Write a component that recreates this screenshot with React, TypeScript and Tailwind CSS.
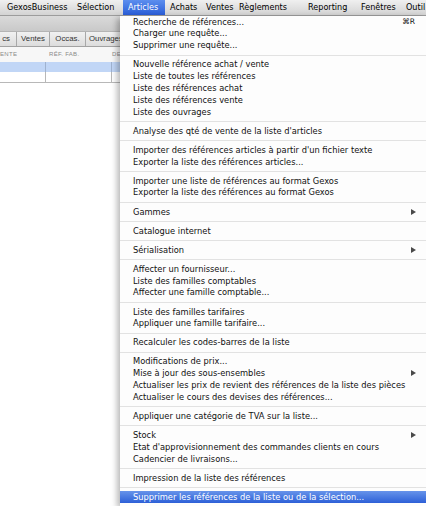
import React from "react";

type Item = { label: string; arrow?: boolean; shortcut?: string; active?: boolean };

const groups: Item[][] = [
  [
    { label: "Recherche de références...", shortcut: "⌘R" },
    { label: "Charger une requête..." },
    { label: "Supprimer une requête..." },
  ],
  [
    { label: "Nouvelle référence achat / vente" },
    { label: "Liste de toutes les références" },
    { label: "Liste des références achat" },
    { label: "Liste des références vente" },
    { label: "Liste des ouvrages" },
  ],
  [{ label: "Analyse des qté de vente de la liste d'articles" }],
  [
    { label: "Importer des références articles à partir d'un fichier texte" },
    { label: "Exporter la liste des références articles..." },
  ],
  [
    { label: "Importer une liste de références au format Gexos" },
    { label: "Exporter la liste des références au format Gexos" },
  ],
  [{ label: "Gammes", arrow: true }],
  [{ label: "Catalogue internet" }],
  [{ label: "Sérialisation", arrow: true }],
  [
    { label: "Affecter un fournisseur..." },
    { label: "Liste des familles comptables" },
    { label: "Affecter une famille comptable..." },
  ],
  [
    { label: "Liste des familles tarifaires" },
    { label: "Appliquer une famille tarifaire..." },
  ],
  [{ label: "Recalculer les codes-barres de la liste" }],
  [
    { label: "Modifications de prix..." },
    { label: "Mise à jour des sous-ensembles", arrow: true },
    { label: "Actualiser les prix de revient des références de la liste des pièces" },
    { label: "Actualiser le cours des devises des références..." },
  ],
  [{ label: "Appliquer une catégorie de TVA sur la liste..." }],
  [
    { label: "Stock", arrow: true },
    { label: "Etat d'approvisionnement des commandes clients en cours" },
    { label: "Cadencier de livraisons..." },
  ],
  [{ label: "Impression de la liste des références" }],
  [{ label: "Supprimer les références de la liste ou de la sélection...", active: true }],
];

const menuBar = [
  { label: "GexosBusiness", w: "w-[70px]" },
  { label: "Sélection", w: "w-[51px]" },
  { label: "Articles", w: "w-[42px]", active: true },
  { label: "Achats", w: "w-[36px]" },
  { label: "Ventes", w: "w-[33px]" },
  { label: "Règlements", w: "w-[69px]" },
  { label: "Reporting", w: "w-[53px]" },
  { label: "Fenêtres", w: "w-[45px]" },
  { label: "Outil", w: "w-[30px]" },
];

function Arrow() {
  return (
    <svg width="5" height="6" viewBox="0 0 5 6" className="block">
      <polygon points="0,0 5,3 0,6" fill="#4a4a4a" />
    </svg>
  );
}

function MenuRow({ item }: { item: Item }) {
  return (
    <div
      className={
        "flex h-[11.8px] items-center pl-[13px] pr-[10px] " +
        (item.active ? "bg-gradient-to-b from-[#6793ea] to-[#2d5fd7] text-white" : "text-[#111]")
      }
    >
      <span className="flex-1 whitespace-nowrap">{item.label}</span>
      {item.shortcut ? <span className="pr-[1px] text-[7.6px]">{item.shortcut}</span> : null}
      {item.arrow ? <Arrow /> : null}
    </div>
  );
}

export default function App() {
  return (
    <div className="relative h-[506px] w-[426px] overflow-hidden bg-white font-['DejaVu_Sans',Verdana,sans-serif]">
      {/* menu bar */}
      <div className="flex h-[16px] items-center border-b border-[#9c9c9c] bg-gradient-to-b from-[#f0f0f0] to-[#d3d3d3] pl-[2px] text-[8.1px] text-black">
        {menuBar.map((m) => (
          <div
            key={m.label}
            className={
              "flex h-full shrink-0 items-center whitespace-nowrap pl-[5px] " +
              m.w +
              (m.active ? " bg-gradient-to-b from-[#5c8eee] to-[#2a5dd8] text-white" : "")
            }
          >
            {m.label}
          </div>
        ))}
      </div>

      {/* window behind the menu */}
      <div className="h-[16px] border-b border-[#b4b4b4] bg-gradient-to-b from-[#dadada] to-[#c9c9c9]" />
      <div className="flex h-[15px] items-stretch border-b border-[#a2a2a2] bg-gradient-to-b from-[#f1f1f1] to-[#dcdcdc] font-['Liberation_Sans',Arial,sans-serif] text-[7.8px] text-[#333]">
        <div className="flex w-[17px] items-center justify-end border-r border-[#a8a8a8] pr-[6px]">cs</div>
        <div className="flex w-[33px] items-center justify-center border-r border-[#a8a8a8]">Ventes</div>
        <div className="flex w-[36px] items-center justify-center border-r border-[#a8a8a8]">Occas.</div>
        <div className="flex w-[50px] items-center pl-[3px]">Ouvrages</div>
      </div>
      <div className="flex h-[15px] items-center bg-[#f7f7f7] font-['Liberation_Sans',Arial,sans-serif] text-[6px] tracking-[0.3px] text-[#8a8a8a]">
        <div className="w-[47px]">ENTE</div>
        <div className="w-[65px] pl-[2px]">RÉF. FAB.</div>
        <div>DE</div>
      </div>
      <div className="flex h-[10px] bg-[#c1d6f6]">
        <div className="w-[46px] border-r border-[#9fb2cf]" />
        <div className="w-[66px] border-r border-[#9fb2cf]" />
      </div>
      <div className="flex h-[11px] border-b border-[#b8b8b8]">
        <div className="w-[46px] border-r border-[#b8b8b8]" />
        <div className="w-[66px] border-r border-[#b8b8b8]" />
      </div>

      {/* Articles dropdown */}
      <div className="absolute bottom-0 left-[120px] right-0 top-[16px] bg-[#fdfdfd] text-[8.3px] shadow-[-3px_2px_6px_rgba(0,0,0,0.28)]">
        {groups.map((g, gi) => (
          <div key={gi}>
            {gi > 0 ? (
              <div className="flex h-[7.3px] items-center">
                <div className="h-px w-full bg-[#e2e2e2]" />
              </div>
            ) : null}
            {g.map((it) => (
              <MenuRow key={it.label} item={it} />
            ))}
          </div>
        ))}
      </div>
    </div>
  );
}
